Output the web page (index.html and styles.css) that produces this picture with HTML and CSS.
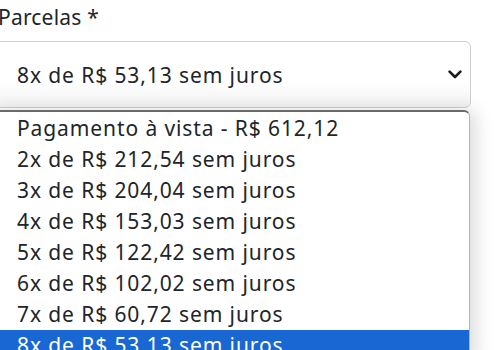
FILE: index.html
```html
<!DOCTYPE html>
<html lang="pt">
<head>
<meta charset="utf-8">
<link rel="stylesheet" href="styles.css">
</head>
<body>
<div class="field">
  <div class="label">Parcelas *</div>
  <div class="select">
    <span class="value">8x de R$ 53,13 sem juros</span>
    <svg class="chev" width="14" height="9" viewBox="0 0 14 9"><path d="M1.6 1.6 L7 7 L12.4 1.6" fill="none" stroke="#1a1a1a" stroke-width="2.6" stroke-linecap="round" stroke-linejoin="round"/></svg>
  </div>
  <ul class="menu">
    <li>Pagamento à vista - R$ 612,12</li>
    <li>2x de R$ 212,54 sem juros</li>
    <li>3x de R$ 204,04 sem juros</li>
    <li>4x de R$ 153,03 sem juros</li>
    <li>5x de R$ 122,42 sem juros</li>
    <li>6x de R$ 102,02 sem juros</li>
    <li>7x de R$ 60,72 sem juros</li>
    <li class="active">8x de R$ 53,13 sem juros</li>
  </ul>
</div>
</body>
</html>
```
FILE: styles.css
```css
html, body {
  margin: 0;
  padding: 0;
  background: #fff;
  overflow: hidden;
  width: 500px;
  height: 350px;
}
body {
  font-family: "Noto Sans", "Open Sans", sans-serif;
  font-size: 21px;
  letter-spacing: 0.9px;
  color: #212529;
}
.field {
  margin-left: -10px;
  width: 481px;
}
.label {
  box-sizing: border-box;
  height: 41px;
  padding: 2px 0 0 8px;
  line-height: 30px;
  letter-spacing: 0.2px;
}
.select {
  box-sizing: border-box;
  height: 67px;
  border: 1px solid #cfcfcf;
  border-radius: 6px;
  background: linear-gradient(#fff 60%, #f3f3f3);
  display: flex;
  align-items: center;
  justify-content: space-between;
  padding: 0 8px 0 26px;
}
.chev {
  display: block;
}
.menu {
  list-style: none;
  margin: 2px 1px 0 0;
  padding: 1px 0 0;
  border: 1px solid #b5b5b5;
  border-top: 2px solid #6a6a6a;
  border-radius: 0 6px 0 0;
  box-shadow: 6px 0 18px rgba(0,0,0,0.14);
  background: #fff;
}
.menu li {
  height: 31px;
  line-height: 31px;
  padding-left: 26px;
  white-space: nowrap;
}
.menu li.active {
  background: #1967d2;
  color: #fff;
}
```
